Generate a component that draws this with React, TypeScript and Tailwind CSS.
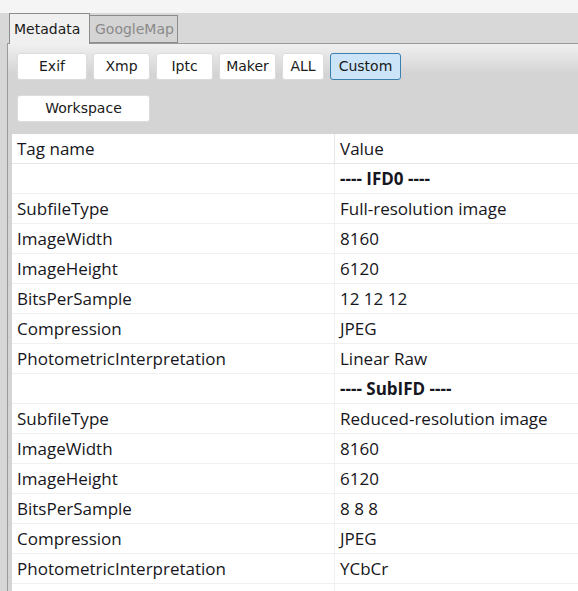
const rows: Array<{ tag: string; value: string; section?: boolean }> = [
  { tag: '', value: '---- IFD0 ----', section: true },
  { tag: 'SubfileType', value: 'Full-resolution image' },
  { tag: 'ImageWidth', value: '8160' },
  { tag: 'ImageHeight', value: '6120' },
  { tag: 'BitsPerSample', value: '12 12 12' },
  { tag: 'Compression', value: 'JPEG' },
  { tag: 'PhotometricInterpretation', value: 'Linear Raw' },
  { tag: '', value: '---- SubIFD ----', section: true },
  { tag: 'SubfileType', value: 'Reduced-resolution image' },
  { tag: 'ImageWidth', value: '8160' },
  { tag: 'ImageHeight', value: '6120' },
  { tag: 'BitsPerSample', value: '8 8 8' },
  { tag: 'Compression', value: 'JPEG' },
  { tag: 'PhotometricInterpretation', value: 'YCbCr' },
  { tag: '', value: '' },
]

const uiFont = "font-['DejaVu_Sans',sans-serif]"
const tableFont = "font-['Open_Sans',sans-serif]"

function Btn({ label, active, wide }: { label: string; active?: boolean; wide?: string }) {
  return (
    <button
      className={`h-[27px] rounded-[3px] border text-[14px] text-[#1a1a1a] ${uiFont} ${wide ?? ''} ${
        active ? 'border-[#3c7fb1] bg-[#cce4f7]' : 'border-[#dcdcdc] bg-white'
      }`}
    >
      {label}
    </button>
  )
}

export default function App() {
  return (
    <div className="h-[591px] w-[578px] overflow-hidden bg-[#f5f5f5]">
      <div className="h-[13px]" />
      {/* tab strip */}
      <div className="flex h-[30px] items-end bg-[#d8d8d8] pl-[9px]">
        <div
          className={`relative z-10 -mb-px flex h-[31px] w-[81px] items-center border border-b-0 border-[#8c8c8c] bg-[#f0f0f0] pl-[4px] text-[14px] text-[#1a1a1a] ${uiFont}`}
        >
          Metadata
        </div>
        <div
          className={`flex h-[28px] w-[88px] items-center border border-l-0 border-[#8c8c8c] bg-[#d4d4d4] pl-[5px] text-[14px] text-[#8a8a8a] ${uiFont}`}
        >
          GoogleMap
        </div>
      </div>
      {/* pane */}
      <div className="flex h-[548px] bg-[#d6d6d6]">
        <div className="w-[7px] shrink-0" />
        <div className="flex flex-1 flex-col border-l border-t border-[#9a9a9a] bg-[linear-gradient(#f0f0f0_0px,#d4d4d4_30px,#d4d4d4)] pl-[4px]">
          <div className="flex gap-[6px] pl-[5px] pt-[9px]">
            <Btn label="Exif" wide="w-[70px]" />
            <Btn label="Xmp" wide="w-[57px]" />
            <Btn label="Iptc" wide="w-[57px]" />
            <Btn label="Maker" wide="w-[57px]" />
            <Btn label="ALL" wide="w-[42px]" />
            <Btn label="Custom" active wide="w-[71px]" />
          </div>
          <div className="pl-[5px] pt-[15px]">
            <Btn label="Workspace" wide="w-[133px]" />
          </div>
          <div className={`mt-[12px] flex-1 bg-white text-[17px] text-[#161620] ${tableFont}`}>
            <div className="flex h-[30px] items-center border-b border-[#e6e6e6]">
              <div className="w-[323px] border-r border-[#e6e6e6] pl-[5px] leading-[29px]">Tag name</div>
              <div className="pl-[5px]">Value</div>
            </div>
            {rows.map((r, i) => (
              <div key={i} className="flex h-[30px] items-center border-b border-[#f0f0f0]">
                <div className="h-full w-[323px] border-r border-[#f0f0f0] pl-[5px] leading-[29px]">{r.tag}</div>
                <div className={`pl-[5px] leading-[29px] ${r.section ? 'font-bold' : ''}`}>{r.value}</div>
              </div>
            ))}
          </div>
        </div>
      </div>
    </div>
  )
}
